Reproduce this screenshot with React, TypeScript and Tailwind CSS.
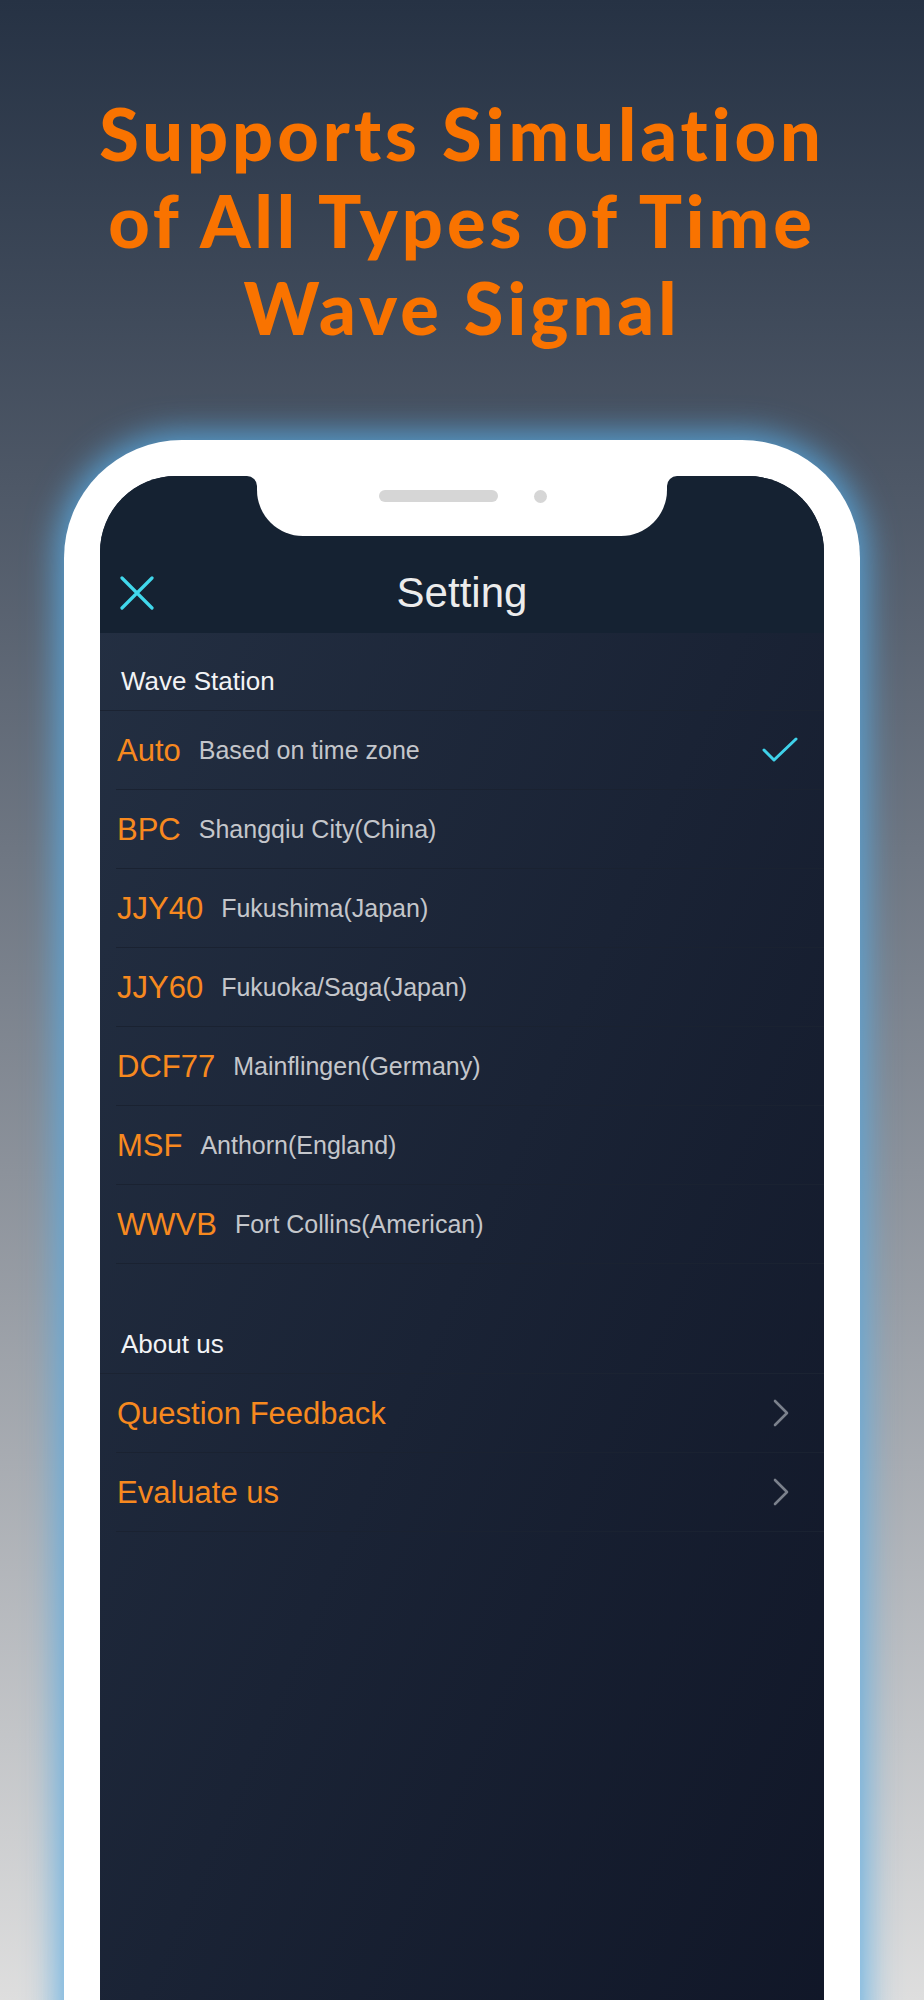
import { useState } from 'react';

type Station = { code: string; place: string };

const stations: Station[] = [
  { code: 'Auto', place: 'Based on time zone' },
  { code: 'BPC', place: 'Shangqiu City(China)' },
  { code: 'JJY40', place: 'Fukushima(Japan)' },
  { code: 'JJY60', place: 'Fukuoka/Saga(Japan)' },
  { code: 'DCF77', place: 'Mainflingen(Germany)' },
  { code: 'MSF', place: 'Anthorn(England)' },
  { code: 'WWVB', place: 'Fort Collins(American)' },
];

const aboutItems = ['Question Feedback', 'Evaluate us'];

const CloseIcon = () => (
  <svg width="34" height="34" viewBox="0 0 34 34" fill="none">
    <path d="M2 2L32 32M32 2L2 32" stroke="#41d8ec" strokeWidth="3.2" strokeLinecap="round" />
  </svg>
);

const CheckIcon = () => (
  <svg width="36" height="26" viewBox="0 0 36 26" fill="none">
    <path d="M2 13L12 23L34 2" stroke="#3fd2ea" strokeWidth="3" strokeLinecap="round" strokeLinejoin="round" />
  </svg>
);

const ChevronIcon = () => (
  <svg width="16" height="28" viewBox="0 0 16 28" fill="none">
    <path d="M2 2L14 14L2 26" stroke="#7b818c" strokeWidth="2.6" strokeLinecap="round" strokeLinejoin="round" />
  </svg>
);

const Separator = ({ inset }: { inset?: boolean }) => (
  <div className={inset ? 'ml-[16px] h-px bg-[#1a2231]' : 'h-px bg-[#1b2332]'} />
);

const SectionHeader = ({ title, tall }: { title: string; tall?: boolean }) => (
  <>
    <div
      className={`flex items-end pl-[21px] pb-[14px] ${tall ? 'h-[109px]' : 'h-[77px]'}`}
    >
      <span className="text-[26px] leading-[30px] text-[#f2f3f5]">{title}</span>
    </div>
    <Separator />
  </>
);

function SettingScreen() {
  const [selected, setSelected] = useState('Auto');

  return (
    <div className="relative h-full overflow-hidden rounded-[76px] bg-gradient-to-br from-[#243043] to-[#101627] font-['Liberation_Sans',Arial,sans-serif]">
      {/* notch */}
      <div className="absolute left-1/2 top-0 z-10 h-[60px] w-[410px] -translate-x-1/2 rounded-b-[46px] bg-white">
        <div className="absolute left-[122px] top-[14px] h-[12px] w-[119px] rounded-full bg-[#d6d6d6]" />
        <div className="absolute left-[277px] top-[14px] h-[13px] w-[13px] rounded-full bg-[#d6d6d6]" />
        <div className="absolute -left-[10px] top-0 h-[10px] w-[10px] bg-white">
          <div className="h-full w-full rounded-tr-[10px] bg-[#152232]" />
        </div>
        <div className="absolute -right-[10px] top-0 h-[10px] w-[10px] bg-white">
          <div className="h-full w-full rounded-tl-[10px] bg-[#152232]" />
        </div>
      </div>

      <header className="bg-[#152232] pt-[77px]">
        <div className="grid h-[80px] grid-cols-[1fr_auto_1fr] items-center">
          <button className="ml-[20px] flex h-[34px] w-[34px] items-center justify-center">
            <CloseIcon />
          </button>
          <h1 className="text-[42px] leading-none text-[#ececec]">Setting</h1>
          <div />
        </div>
      </header>

      <SectionHeader title="Wave Station" />
      {stations.map((s) => (
        <div key={s.code}>
          <button
            onClick={() => setSelected(s.code)}
            className="flex h-[78px] w-full items-center pl-[17px] pr-[26px] text-left"
          >
            <span className="text-[31px] leading-none text-[#f7891f]">{s.code}</span>
            <span className="ml-[18px] text-[25px] leading-none text-[#c4c6cb]">{s.place}</span>
            <span className="ml-auto">{selected === s.code && <CheckIcon />}</span>
          </button>
          <Separator inset />
        </div>
      ))}

      <SectionHeader title="About us" tall />
      {aboutItems.map((item) => (
        <div key={item}>
          <button className="flex h-[78px] w-full items-center pl-[17px] pr-[35px] text-left">
            <span className="text-[31px] leading-none text-[#f7891f]">{item}</span>
            <span className="ml-auto">
              <ChevronIcon />
            </span>
          </button>
          <Separator inset />
        </div>
      ))}
    </div>
  );
}

export default function App() {
  return (
    <div className="flex h-[2000px] w-[924px] flex-col items-center overflow-hidden bg-gradient-to-b from-[#263244] to-[#dedede]">
      <h2 className="pt-[90px] text-center font-['Lato',sans-serif] text-[72px] font-black leading-[87px] tracking-[4px] text-[#f97300] [font-variant-ligatures:none]">
        <span className="block">Supports Simulation</span>
        <span className="block">of All Types of Time</span>
        <span className="block">Wave Signal</span>
      </h2>

      <div className="mt-[89px] h-[1720px] w-[796px] shrink-0 rounded-[118px] bg-white p-[36px] shadow-[0_0_32px_7px_rgba(88,172,228,0.85)]">
        <SettingScreen />
      </div>
    </div>
  );
}
